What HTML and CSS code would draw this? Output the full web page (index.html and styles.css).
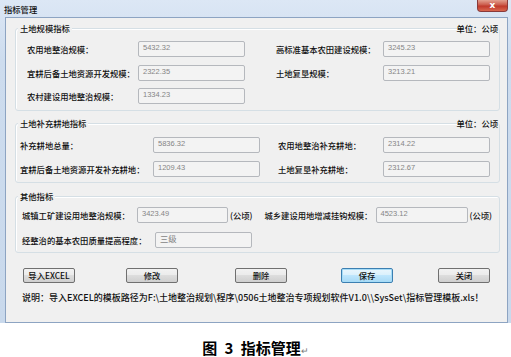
FILE: index.html
```html
<!DOCTYPE html>
<html lang="zh-CN">
<head>
  <meta charset="UTF-8" />
  <title>指标管理</title>
  <link rel="stylesheet" href="styles.css">
</head>
<body>
  <div class="window">
    <div class="titlebar">
      <span class="title">指标管理</span>
      <span class="close-btn">x</span>
    </div>
    <div class="client">
      <section class="group group-scale">
        <div class="group-title">土地规模指标</div>
        <div class="group-unit">单位：公顷</div>
        <div class="row">
          <div class="pair">
            <label class="label">农用地整治规模：</label>
            <div class="field">5432.32</div>
          </div>
          <div class="pair pair-right">
            <label class="label">高标准基本农田建设规模：</label>
            <div class="field">3245.23</div>
          </div>
        </div>
        <div class="row">
          <div class="pair">
            <label class="label">宜耕后备土地资源开发规模：</label>
            <div class="field">2322.35</div>
          </div>
          <div class="pair pair-right">
            <label class="label">土地复垦规模：</label>
            <div class="field">3213.21</div>
          </div>
        </div>
        <div class="row">
          <div class="pair">
            <label class="label">农村建设用地整治规模：</label>
            <div class="field">1334.23</div>
          </div>
        </div>
      </section>

      <section class="group group-supply">
        <div class="group-title">土地补充耕地指标</div>
        <div class="group-unit">单位：公顷</div>
        <div class="row">
          <div class="pair">
            <label class="label">补充耕地总量：</label>
            <div class="field">5836.32</div>
          </div>
          <div class="pair pair-right">
            <label class="label">农用地整治补充耕地：</label>
            <div class="field">2314.22</div>
          </div>
        </div>
        <div class="row">
          <div class="pair">
            <label class="label">宜耕后备土地资源开发补充耕地：</label>
            <div class="field">1209.43</div>
          </div>
          <div class="pair pair-right">
            <label class="label">土地复垦补充耕地：</label>
            <div class="field">2312.67</div>
          </div>
        </div>
      </section>

      <section class="group group-other">
        <div class="group-title">其他指标</div>
        <div class="row">
          <div class="pair">
            <label class="label">城镇工矿建设用地整治规模：</label>
            <div class="field">3423.49</div>
            <span class="suffix">(公顷)</span>
          </div>
          <div class="pair pair-right">
            <label class="label">城乡建设用地增减挂钩规模：</label>
            <div class="field">4523.12</div>
            <span class="suffix">(公顷)</span>
          </div>
        </div>
        <div class="row">
          <div class="pair pair-wide">
            <label class="label">经整治的基本农田质量提高程度：</label>
            <div class="field">三级</div>
          </div>
        </div>
      </section>

      <div class="buttons">
        <button class="btn btn-import">导入EXCEL</button>
        <button class="btn btn-edit">修改</button>
        <button class="btn btn-delete">删除</button>
        <button class="btn btn-save">保存</button>
        <button class="btn btn-close">关闭</button>
      </div>

      <p class="note">说明：导入EXCEL的模板路径为F:\土地整治规划\程序\0506土地整治专项规划软件V1.0\\SysSet\指标管理模板.xls！</p>
    </div>
  </div>

  <p class="caption">图 3 指标管理<span class="para-mark">↵</span></p>
</body>
</html>
```

FILE: styles.css
```css
body {
  margin: 0;
  background: #fff;
  font-family: "Noto Sans CJK SC", sans-serif;
  font-size: 8.3px;
  font-weight: 500;
  color: #111;
}
.window {
  width: 511px;
  box-sizing: border-box;
  padding: 0 3px 0 5px;
  background: linear-gradient(#dce7f5, #cddcee 60px, #c9d9ec);
}
.titlebar {
  position: relative;
  height: 17px;
}
.title {
  display: inline-block;
  margin-left: -1px;
  line-height: 18px;
  color: #111;
}
.close-btn {
  position: absolute;
  top: 0;
  right: 0;
  width: 31px;
  height: 12px;
  box-sizing: border-box;
  border: 1px solid #8a3a3a;
  border-top: none;
  border-radius: 0 0 4px 4px;
  background: linear-gradient(#e3a08f, #cb5a4a 45%, #c0392b 55%, #d9674f);
  color: #fff;
  font-family: "DejaVu Sans", sans-serif;
  font-weight: bold;
  font-size: 9px;
  line-height: 10px;
  text-align: center;
}
.client {
  height: 304px;
  border: 1px solid #8da4c2;
  background: #f0f0f0;
}
.group {
  position: relative;
  margin: 10px 7px 0 9px;
  border: 1px solid #d5dfe5;
  border-radius: 3px;
  box-shadow: inset 1px 1px 0 #fff;
  display: flex;
  flex-direction: column;
}
.group-title {
  position: absolute;
  top: -7px;
  left: 2px;
  padding: 0 2px;
  line-height: 12px;
  background: #f0f0f0;
}
.group-unit {
  position: absolute;
  top: -7px;
  right: 1px;
  line-height: 12px;
  background: #f0f0f0;
}
.row {
  display: flex;
  align-items: center;
  height: 16px;
}
.pair {
  display: flex;
  align-items: center;
}
.label {
  white-space: nowrap;
}
.field {
  width: 107px;
  height: 16px;
  box-sizing: border-box;
  padding: 1px 0 0 4px;
  border: 1px solid #b5b8bd;
  border-radius: 2px;
  background: #f3f3f3;
  color: #858585;
  font-family: "Liberation Sans", sans-serif;
  font-weight: normal;
  font-size: 7.5px;
  line-height: 10px;
}
.suffix {
  margin-left: 2px;
}

/* 土地规模指标 */
.group-scale {
  padding: 12px 0 6px 11px;
  gap: 7.5px;
}
.group-scale .label {
  width: 111px;
}
.group-scale .pair-right {
  margin-left: 31px;
}
.group-scale .pair-right .label {
  width: 107px;
}

/* 土地补充耕地指标 */
.group-supply {
  margin-top: 12px;
  padding: 13px 0 5px 4px;
  gap: 8px;
}
.group-supply .label {
  width: 133px;
}
.group-supply .pair-right {
  margin-left: 18px;
}
.group-supply .pair-right .label {
  width: 105px;
}

/* 其他指标 */
.group-other {
  margin-top: 13px;
  padding: 10px 0 4px 6px;
  gap: 9px;
}
.group-other .label {
  width: 115px;
}
.group-other .field {
  width: 91px;
}
.group-other .pair-right {
  margin-left: 12px;
}
.group-other .pair-right .label {
  width: 111px;
}
.group-other .pair-right .field {
  width: 92px;
}
.group-other .pair-wide .label {
  width: 133px;
}
.group-other .pair-wide .field {
  width: 97px;
  font-family: "Noto Sans CJK SC", sans-serif;
  font-size: 8.3px;
  line-height: 11px;
  padding-top: 0;
}

.buttons {
  display: flex;
  margin: 15px 0 0 17px;
}
.btn {
  width: 52px;
  height: 15px;
  padding: 0;
  border: 1px solid #707070;
  border-radius: 2px;
  background: linear-gradient(#f2f2f2, #ebebeb 50%, #dddddd 50%, #cfcfcf);
  font-family: "Noto Sans CJK SC", sans-serif;
  font-weight: 500;
  font-size: 8.3px;
  line-height: 13px;
  color: #111;
}
.btn-edit {
  margin-left: 51px;
}
.btn-delete {
  margin-left: 57px;
}
.btn-save {
  margin-left: 54px;
  border-color: #3c7fb1;
  box-shadow: inset 0 0 0 1px #a6dcf7;
  background: linear-gradient(#eaf6fd, #d9f0fc 50%, #bee6fd 50%, #a7d9f5);
}
.btn-close {
  margin-left: 45px;
}
.note {
  margin: 9px 0 0 16px;
  font-size: 9px;
  line-height: 12px;
  white-space: nowrap;
}
.caption {
  margin: 16px 0 0;
  text-align: center;
  font-size: 15px;
  font-weight: bold;
  word-spacing: 4px;
  line-height: 18px;
  color: #000;
}
.para-mark {
  font-size: 9px;
  font-weight: normal;
  color: #777;
}
```
